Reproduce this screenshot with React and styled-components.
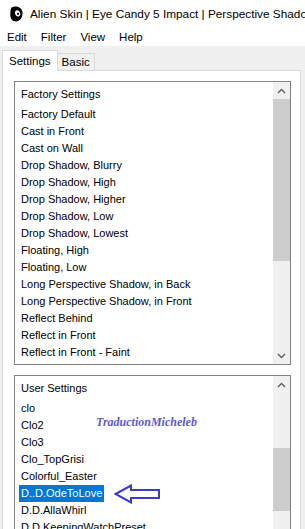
import React from 'react'
import styled, { createGlobalStyle } from 'styled-components'

const GlobalStyle = createGlobalStyle`
  html, body {
    margin: 0;
    padding: 0;
    background: #f0f0f0;
    font-family: 'Liberation Sans', Arial, sans-serif;
  }
`

const Window = styled.div`
  width: 305px;
  height: 529px;
  overflow: hidden;
  background: #f0f0f0;
  font-size: 11px;
  color: #000;
`

const TitleBar = styled.div`
  height: 27px;
  background: #fff;
  display: flex;
  align-items: center;
  padding-left: 10px;
  gap: 7px;
  white-space: nowrap;
  font-size: 11.8px;
  overflow: hidden;
`

const TitleText = styled.span`
  flex: none;
`

const LogoSvg = styled.svg`
  flex: none;
`

const MenuBar = styled.div`
  height: 19px;
  background: #fff;
  display: flex;
  align-items: center;
  padding-left: 7px;
  gap: 14px;
  font-size: 11.5px;
`

const MenuItem = styled.span``

const Body = styled.div`
  padding: 3px 0 0 2px;
`

const TabRow = styled.div`
  display: flex;
  align-items: flex-end;
  height: 21px;
`

const Tab = styled.div`
  height: ${p => (p.$active ? '21px' : '17px')};
  box-sizing: border-box;
  padding: 0 ${p => (p.$active ? '6px' : '4px')};
  display: flex;
  align-items: center;
  border: 1px solid #d9d9d9;
  border-bottom: none;
  border-left: ${p => (p.$active ? '1px solid #d9d9d9' : 'none')};
  background: ${p => (p.$active ? '#fff' : '#f0f0f0')};
  font-size: 11.5px;
  position: relative;
  z-index: ${p => (p.$active ? 1 : 0)};
  margin-bottom: ${p => (p.$active ? '-1px' : '0')};
`

const Panel = styled.div`
  width: 299px;
  height: 480px;
  box-sizing: border-box;
  border: 1px solid #d9d9d9;
  background: #fff;
  padding: 10px 9px 0 11px;
  display: flex;
  flex-direction: column;
  gap: 10px;
`

const ListBox = styled.div`
  height: ${p => p.$height}px;
  flex: none;
  box-sizing: border-box;
  border: 1px solid #828282;
  display: flex;
`

const Items = styled.div`
  flex: 1;
  position: relative;
  padding: 4px 0 0 4px;
  display: flex;
  flex-direction: column;
  align-items: flex-start;
  overflow: hidden;
`

const Header = styled.div`
  height: 17px;
  line-height: 17px;
  padding: 0 2px;
  margin-bottom: 3px;
`

const Item = styled.div`
  height: 17px;
  line-height: 17px;
  padding: 0 2px;
  white-space: nowrap;
  background: ${p => (p.$selected ? '#0078d7' : 'transparent')};
  color: ${p => (p.$selected ? '#fff' : '#000')};
`

const ScrollBar = styled.div`
  width: 17px;
  background: #f0f0f0;
  display: flex;
  flex-direction: column;
`

const ArrowButton = styled.div`
  height: 17px;
  flex: none;
  display: flex;
  align-items: center;
  justify-content: center;
`

const Track = styled.div`
  flex: 1;
  padding-top: ${p => p.$offset}px;
`

const Thumb = styled.div`
  height: ${p => p.$size}px;
  background: #cdcdcd;
`

const Watermark = styled.div`
  position: absolute;
  left: 81px;
  top: 39px;
  font-family: 'Liberation Serif', 'Times New Roman', serif;
  font-style: italic;
  font-weight: bold;
  font-size: 12px;
  color: #5b5bcf;
  white-space: nowrap;
`

const Pointer = styled.svg`
  position: absolute;
  left: 99px;
  top: 108px;
`

const Chevron = ({ down }) => (
  <svg width="9" height="6" viewBox="0 0 9 6">
    <polyline
      points={down ? '1,1 4.5,4.5 8,1' : '1,5 4.5,1.5 8,5'}
      fill="none"
      stroke="#606060"
      strokeWidth="1.4"
    />
  </svg>
)

const Logo = () => (
  <LogoSvg width="13" height="16" viewBox="0 0 13 16">
    <path d="M1.5 1.5 C5 -0.5 12 0.5 12.5 6.5 C13 11 10 15.5 6 15.5 C2 15.5 0 12 0.3 8 C0.5 5 0.5 3 1.5 1.5 Z" fill="#000" />
    <ellipse cx="7.6" cy="7.4" rx="2.5" ry="3.2" fill="#fff" transform="rotate(-25 7.6 7.4)" />
    <circle cx="8" cy="7.8" r="1.1" fill="#000" />
  </LogoSvg>
)

const factory = [
  'Factory Default',
  'Cast in Front',
  'Cast on Wall',
  'Drop Shadow, Blurry',
  'Drop Shadow, High',
  'Drop Shadow, Higher',
  'Drop Shadow, Low',
  'Drop Shadow, Lowest',
  'Floating, High',
  'Floating, Low',
  'Long Perspective Shadow, in Back',
  'Long Perspective Shadow, in Front',
  'Reflect Behind',
  'Reflect in Front',
  'Reflect in Front - Faint',
]

const user = [
  'clo',
  'Clo2',
  'Clo3',
  'Clo_TopGrisi',
  'Colorful_Easter',
  'D..D.OdeToLove',
  'D.D.AllaWhirl',
  'D.D.KeepingWatchPreset',
]

export default function App() {
  return (
    <Window>
      <GlobalStyle />
      <TitleBar>
        <Logo />
        <TitleText>Alien Skin | Eye Candy 5 Impact | Perspective Shadow</TitleText>
      </TitleBar>
      <MenuBar>
        <MenuItem>Edit</MenuItem>
        <MenuItem>Filter</MenuItem>
        <MenuItem>View</MenuItem>
        <MenuItem>Help</MenuItem>
      </MenuBar>
      <Body>
        <TabRow>
          <Tab $active>Settings</Tab>
          <Tab>Basic</Tab>
        </TabRow>
        <Panel>
          <ListBox $height={284}>
            <Items>
              <Header>Factory Settings</Header>
              {factory.map(name => (
                <Item key={name}>{name}</Item>
              ))}
            </Items>
            <ScrollBar>
              <ArrowButton><Chevron /></ArrowButton>
              <Track $offset={0}><Thumb $size={162} /></Track>
              <ArrowButton><Chevron down /></ArrowButton>
            </ScrollBar>
          </ListBox>
          <ListBox $height={200}>
            <Items>
              <Header>User Settings</Header>
              {user.map(name => (
                <Item key={name} $selected={name === 'D..D.OdeToLove'}>{name}</Item>
              ))}
              <Watermark>TraductionMicheleb</Watermark>
              <Pointer width="48" height="20" viewBox="0 0 48 20">
                <path
                  d="M1.5 10 L17 1.5 L17 6 L45 6 L45 14 L17 14 L17 18.5 Z"
                  fill="none"
                  stroke="#3a3ad0"
                  strokeWidth="2"
                  strokeLinejoin="miter"
                />
              </Pointer>
            </Items>
            <ScrollBar>
              <ArrowButton><Chevron /></ArrowButton>
              <Track $offset={55}><Thumb $size={63} /></Track>
            </ScrollBar>
          </ListBox>
        </Panel>
      </Body>
    </Window>
  )
}
